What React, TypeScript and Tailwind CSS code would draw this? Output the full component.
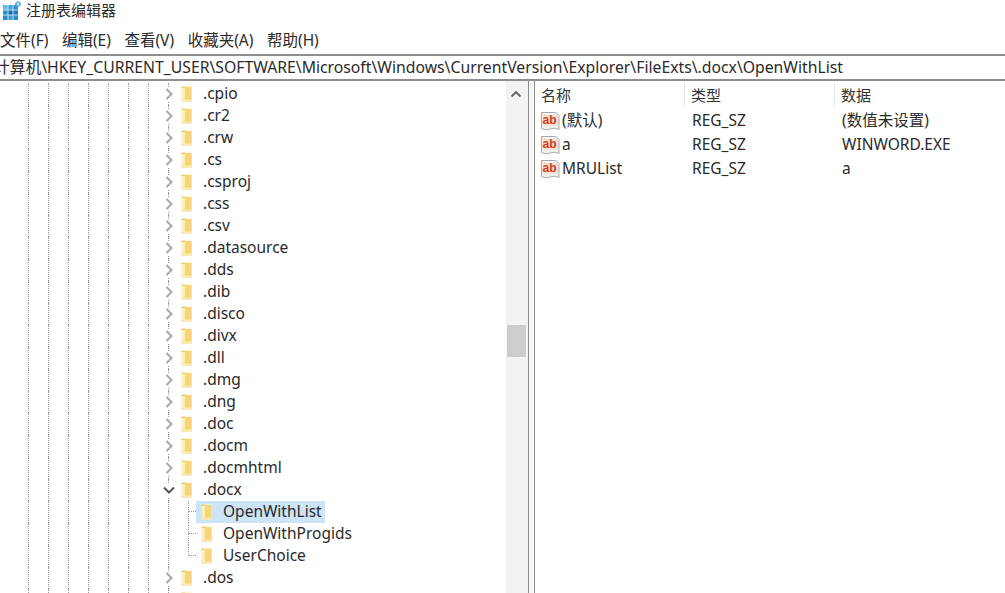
const FONT = "font-['Noto_Sans','Noto_Sans_CJK_SC',sans-serif]";

function RegIcon() {
  return (
    <svg width="20" height="22" viewBox="0 0 20 22" className="shrink-0">
      <rect x="2" y="5" width="15" height="15" fill="#2b8fcb" />
      <rect x="2" y="5" width="5" height="5" fill="#63b7e2" />
      <rect x="7" y="5" width="5" height="5" fill="#3ea2d8" />
      <rect x="12" y="10" width="5" height="5" fill="#1f78b8" />
      <rect x="7" y="10" width="5" height="5" fill="#1a6fae" />
      <rect x="7" y="15" width="5" height="5" fill="#3ea2d8" />
      <path d="M2 10h15M2 15h15M7 5v15M12 5v15" stroke="#cfe9f7" strokeWidth="0.9" />
      <circle cx="17" cy="4" r="2.8" fill="#6fb0d4" />
      <circle cx="17" cy="4" r="1.2" fill="#b5dbee" />
    </svg>
  );
}

function Folder() {
  return (
    <svg width="12" height="16" viewBox="0 0 12 16" className="shrink-0">
      <path d="M0.5 0.5h10.5v15.5H0.5z" fill="#fdeeb8" />
      <path d="M4 1h6.5v13H4z" fill="#f6d679" />
      <path d="M0.5 13.5h10.5V16H0.5z" fill="#fbe9b4" />
      <path d="M0.5 0.5h3.5V2H0.5z" fill="#f0cf7c" />
    </svg>
  );
}

function Chevron({ open }: { open?: boolean }) {
  return (
    <svg width="14" height="14" viewBox="0 0 14 14" className="shrink-0">
      <path
        d={open ? "M2 4.5 7 9.5l5-5" : "M4.5 2 9.5 7l-5 5"}
        fill="none"
        stroke={open ? "#555555" : "#a8a8a8"}
        strokeWidth="2"
      />
    </svg>
  );
}

function Guides({ count }: { count: number }) {
  return (
    <>
      {Array.from({ length: count }).map((_, i) => (
        <div key={i} className="w-5 h-full shrink-0 border-l border-dotted border-[#9a9a9a]" />
      ))}
    </>
  );
}

function Row({ name, open }: { name: string; open?: boolean }) {
  return (
    <div className="flex h-[22px] shrink-0 items-center pl-[28px]">
      <Guides count={7} />
      <div className="w-[13px] h-full shrink-0 flex items-center border-l border-dotted border-[#9a9a9a]">
        <div className="-ml-[7px] bg-white flex">
          <Chevron open={open} />
        </div>
      </div>
      <div className="w-[22px] shrink-0 flex">
        <Folder />
      </div>
      <span className="text-[15.5px] leading-none text-[#2a2a2a]">{name}</span>
    </div>
  );
}

function Child({ name, selected, last }: { name: string; selected?: boolean; last?: boolean }) {
  return (
    <div className="flex h-[22px] shrink-0 items-center pl-[28px]">
      <Guides count={8} />
      <div className="w-2 h-full shrink-0 flex flex-col">
        <div className="h-1/2 border-l border-b border-dotted border-[#9a9a9a]" />
        <div className={`h-1/2 ${last ? "" : "border-l border-dotted border-[#9a9a9a]"}`} />
      </div>
      <div className={`flex items-center h-[22px] pl-[5px] pr-[3px] ${selected ? "bg-[#cce4f7]" : ""}`}>
        <div className="w-[22px] shrink-0 flex">
          <Folder />
        </div>
        <span className="text-[15.5px] leading-none text-[#2a2a2a]">{name}</span>
      </div>
    </div>
  );
}

function AbIcon() {
  return (
    <svg width="21" height="22" viewBox="0 0 21 22" className="shrink-0">
      <path d="M1.5 2.5h14l3.5 3v14c-6-3.5-11 2.5-17.5-1z" fill="#f4f1ee" stroke="#a9a9a9" strokeWidth="1" />
      <rect x="2.5" y="5" width="15.5" height="10.5" fill="#f9ddd3" />
      <text x="2.6" y="14" fontSize="12" fontWeight="700" fill="#cf3d1c" fontFamily="'Liberation Sans',sans-serif">
        ab
      </text>
    </svg>
  );
}

function Value({ name, data }: { name: string; data: string }) {
  return (
    <div className="flex h-6 items-center text-[15.5px] text-[#2a2a2a]">
      <div className="w-[152px] flex items-center">
        <AbIcon />
        <span className="ml-[1px]">{name}</span>
      </div>
      <div className="w-[150px]">REG_SZ</div>
      <div>{data}</div>
    </div>
  );
}

const before = [".cpio", ".cr2", ".crw", ".cs", ".csproj", ".css", ".csv", ".datasource", ".dds", ".dib", ".disco", ".divx", ".dll", ".dmg", ".dng", ".doc", ".docm", ".docmhtml"];

export default function App() {
  return (
    <div className={`${FONT} w-[1005px] h-[593px] overflow-hidden bg-white flex flex-col`}>
      <div className="h-[27px] flex items-center pl-[1px] pb-[5px] shrink-0">
        <RegIcon />
        <span className="ml-[5px] -mt-[2px] text-[15px] text-[#2a2a2a]">注册表编辑器</span>
      </div>
      <div className="h-[27px] flex items-center gap-[13.6px] pt-[1px] text-[15.5px] text-[#2a2a2a] shrink-0">
        <span>文件(F)</span>
        <span>编辑(E)</span>
        <span>查看(V)</span>
        <span>收藏夹(A)</span>
        <span>帮助(H)</span>
      </div>
      <div className="h-[27px] flex items-center border-y-2 border-[#8f8f8f] pt-[1px] text-[15.75px] text-[#2a2a2a] whitespace-nowrap overflow-hidden shrink-0">
        <span className="-ml-[6px]">计算机\HKEY_CURRENT_USER\SOFTWARE\Microsoft\Windows\CurrentVersion\Explorer\FileExts\.docx\OpenWithList</span>
      </div>
      <div className="flex flex-1 min-h-0">
        <div className="w-[506px] shrink-0 pt-[2px] overflow-hidden">
          {before.map((n) => (
            <Row key={n} name={n} />
          ))}
          <Row name=".docx" open />
          <Child name="OpenWithList" selected />
          <Child name="OpenWithProgids" />
          <Child name="UserChoice" last />
          <Row name=".dos" />
          <Row name="" />
        </div>
        <div className="w-[22px] shrink-0 bg-[#f3f3f3] flex flex-col items-center">
          <div className="h-[25px] flex items-center pt-[1px] -ml-[2px]">
            <svg width="12" height="10" viewBox="0 0 12 10">
              <path d="M1.5 7.5 6 3l4.5 4.5" fill="none" stroke="#606060" strokeWidth="1.8" />
            </svg>
          </div>
          <div className="w-[19px] h-[32px] mt-[219px] -ml-[1px] bg-[#cdcdcd]" />
        </div>
        <div className="w-[7px] shrink-0 border-x border-[#8c8c8c] bg-[#f7f7f7]" />
        <div className="flex-1 min-w-0 pl-[5px]">
          <div className="h-[27px] flex items-center text-[15px] text-[#333] pt-[1px]">
            <div className="w-[145px] h-[24px] pl-[1px] border-r border-[#e5e5e5] flex items-center">名称</div>
            <div className="w-[150px] h-[24px] pl-[6px] border-r border-[#e5e5e5] flex items-center">类型</div>
            <div className="pl-[6px]">数据</div>
          </div>
          <div className="pt-[1px]">
            <Value name="(默认)" data="(数值未设置)" />
            <Value name="a" data="WINWORD.EXE" />
            <Value name="MRUList" data="a" />
          </div>
        </div>
      </div>
    </div>
  );
}
